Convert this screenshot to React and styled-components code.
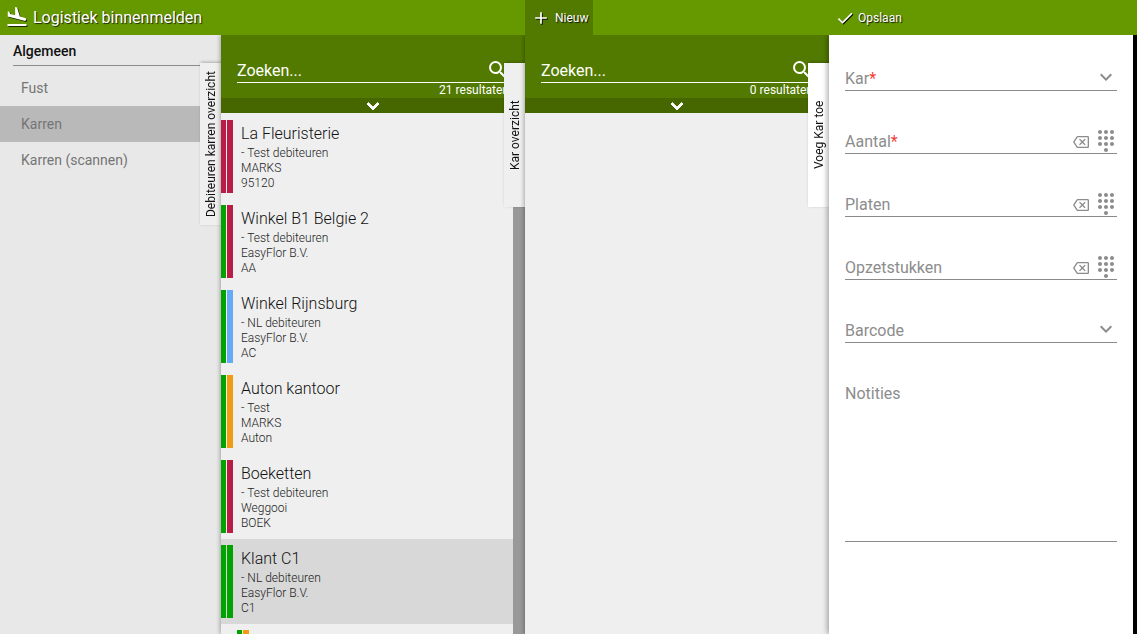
import React from "react";
import styled, { createGlobalStyle } from "styled-components";
import {
  MdFlightLand,
  MdAdd,
  MdCheck,
  MdSearch,
  MdKeyboardArrowDown,
  MdOutlineBackspace,
  MdDialpad,
} from "react-icons/md";

const RED = "#b91d47";
const GREEN = "#00a300";
const BLUE = "#64aaf5";
const ORANGE = "#f09c12";

const items = [
  { title: "La Fleuristerie", lines: ["- Test debiteuren", "MARKS", "95120"], colors: [RED, RED] },
  { title: "Winkel B1 Belgie 2", lines: ["- Test debiteuren", "EasyFlor B.V.", "AA"], colors: [GREEN, RED] },
  { title: "Winkel Rijnsburg", lines: ["- NL debiteuren", "EasyFlor B.V.", "AC"], colors: [GREEN, BLUE] },
  { title: "Auton kantoor", lines: ["- Test", "MARKS", "Auton"], colors: [GREEN, ORANGE] },
  { title: "Boeketten", lines: ["- Test debiteuren", "Weggooi", "BOEK"], colors: [GREEN, RED] },
  { title: "Klant C1", lines: ["- NL debiteuren", "EasyFlor B.V.", "C1"], colors: [GREEN, GREEN], selected: true },
];

const GlobalStyle = createGlobalStyle`
  html, body { margin: 0; padding: 0; height: 100%; overflow: hidden; background: #000; }
  body { font-family: Roboto, "Liberation Sans", sans-serif; }
  #root { height: 100%; }
`;

const Page = styled.div`
  width: 1137px;
  height: 634px;
  display: flex;
  flex-direction: column;
  overflow: hidden;
`;

const TopBar = styled.header`
  height: 35px;
  flex: none;
  display: grid;
  grid-template-columns: 525px 304px 1fr;
  background: #669900;
  color: #fff;
  position: relative;
  z-index: 5;
`;

const Brand = styled.div`
  display: flex;
  align-items: center;
  padding-left: 5px;
  gap: 4px;
  font-size: 16px;
  text-shadow: 1px 1px 1px rgba(0, 0, 0, 0.75);
  svg { filter: drop-shadow(1px 1px 0 rgba(0, 0, 0, 0.75)); margin-top: -2px; }
`;

const ActionCell = styled.div`
  display: flex;
  align-items: stretch;
`;

const ActionButton = styled.div`
  display: flex;
  align-items: center;
  gap: ${(p) => (p.$active ? 4 : 3)}px;
  padding: 0 5px 0 6px;
  background: ${(p) => (p.$active ? "#527a00" : "transparent")};
  font-size: 12px;
  text-shadow: 1px 1px 1px rgba(0, 0, 0, 0.85);
  svg { filter: drop-shadow(1px 1px 0 rgba(0, 0, 0, 0.85)); }
`;

const Columns = styled.main`
  flex: 1;
  min-height: 0;
  display: grid;
  grid-template-columns: 221px 304px 304px 304px 4px;
`;

const Sidebar = styled.nav`
  background: #e8e8e8;
  position: relative;
  z-index: 1;
  padding-top: 6px;
`;

const SectionTitle = styled.div`
  margin: 0 0 4px 13px;
  height: 24px;
  line-height: 20px;
  font-size: 14px;
  font-weight: 500;
  color: #111;
  border-bottom: 1px solid #8a8a8a;
`;

const NavItem = styled.div`
  height: 36px;
  line-height: 36px;
  padding-left: 21px;
  font-size: 14px;
  color: #757575;
  background: ${(p) => (p.$selected ? "#b9b9b9" : "transparent")};
`;

const Panel = styled.section`
  position: relative;
  display: flex;
  flex-direction: column;
  background: #efefef;
  min-height: 0;
  box-shadow: -1px 0 4px rgba(0, 0, 0, 0.3);
  z-index: ${(p) => p.$z};
`;

const SearchHead = styled.div`
  height: 63px;
  flex: none;
  background: #527a00;
  padding: 0 16px;
  color: #fff;
  display: flex;
  flex-direction: column;
`;

const SearchRow = styled.div`
  margin-top: 24px;
  height: 24px;
  display: flex;
  align-items: center;
  justify-content: space-between;
  border-bottom: 1px solid #fff;
  font-size: 16px;
  box-sizing: border-box;
  svg { margin: -2px -1px 0 0; }
`;

const ResultCount = styled.div`
  text-align: right;
  font-size: 12px;
  line-height: 15px;
  white-space: nowrap;
`;

const ExpandStrip = styled.div`
  height: 15px;
  flex: none;
  background: #466600;
  display: flex;
  align-items: center;
  justify-content: center;
  color: #fff;
  overflow: hidden;
  svg path:not([fill="none"]) { stroke: currentColor; stroke-width: 1; }
`;

const ListArea = styled.div`
  flex: 1;
  min-height: 0;
  display: flex;
  overflow: hidden;
`;

const List = styled.div`
  flex: 1;
  min-width: 0;
  overflow: hidden;
  padding-top: 1px;
`;

const Scrollbar = styled.div`
  width: 12px;
  flex: none;
  background: #999;
`;

const Row = styled.article`
  height: 85px;
  box-sizing: border-box;
  padding: 6px 0 6px ${(p) => (p.$indent ? 16 : 0)}px;
  display: flex;
  background: ${(p) => (p.$selected ? "#d8d8d8" : "transparent")};
`;

const Bar = styled.span`
  flex: none;
  width: ${(p) => p.$w}px;
  margin-right: ${(p) => (p.$first ? 1 : 0)}px;
  background: ${(p) => p.$color};
`;

const RowBody = styled.div`
  padding-left: 8px;
`;

const RowTitle = styled.div`
  font-size: 16px;
  font-weight: 300;
  line-height: 20px;
  margin-top: 4px;
  margin-bottom: 2px;
  color: #111;
`;

const RowLine = styled.div`
  font-size: 12px;
  font-weight: 300;
  line-height: 15px;
  color: #222;
`;

const SideTab = styled.div`
  position: absolute;
  top: 28px;
  right: 0;
  width: 21px;
  height: ${(p) => p.$h}px;
  background: ${(p) => p.$bg};
  box-shadow: -1px 1px 3px rgba(0, 0, 0, 0.25);
  z-index: 3;
  display: flex;
  justify-content: center;
  align-items: center;
  writing-mode: vertical-rl;
  transform: rotate(180deg);
  font-size: 12px;
  color: #111;
  white-space: nowrap;
`;

const Form = styled.section`
  background: #fff;
  padding: 0 16px;
  display: flex;
  flex-direction: column;
  gap: 7px;
  position: relative;
  z-index: 4;
  box-shadow: -2px 0 5px rgba(0, 0, 0, 0.3);
`;

const Field = styled.div`
  height: ${(p) => p.$h || 56}px;
  flex: none;
  box-sizing: border-box;
  border-bottom: 1px solid #8a8a8a;
  display: flex;
  align-items: ${(p) => (p.$top ? "flex-start" : "flex-end")};
  padding-top: ${(p) => (p.$top ? 34 : 0)}px;
  color: #8c8c8c;
`;

const FieldLabel = styled.div`
  flex: 1;
  font-size: 16px;
  line-height: 20px;
  padding-bottom: 1px;
`;

const Required = styled.span`
  color: #f44336;
`;

const FieldIcons = styled.div`
  display: flex;
  align-items: flex-end;
  gap: 5px;
  color: #8c8c8c;
`;

const ClearIcon = styled(MdOutlineBackspace)`
  margin-bottom: 3px;
`;

const PadIcon = styled(MdDialpad)`
  margin: 0 -1px 0 0;
`;

const ArrowIcon = styled(MdKeyboardArrowDown)`
  margin: 0 -1px 1px 0;
`;

const Edge = styled.div`
  background: #000;
`;

function SearchHeader({ count }) {
  return (
    <>
      <SearchHead>
        <SearchRow>
          <span>Zoeken...</span>
          <MdSearch size={24} />
        </SearchRow>
        <ResultCount>{count} resultaten</ResultCount>
      </SearchHead>
      <ExpandStrip>
        <MdKeyboardArrowDown size={24} />
      </ExpandStrip>
    </>
  );
}

function ListRow({ item }) {
  return (
    <Row $selected={item.selected}>
      <Bar $w={5} $first $color={item.colors[0]} />
      <Bar $w={6} $color={item.colors[1]} />
      <RowBody>
        <RowTitle>{item.title}</RowTitle>
        {item.lines.map((line) => (
          <RowLine key={line}>{line}</RowLine>
        ))}
      </RowBody>
    </Row>
  );
}

function NumberField({ label, required }) {
  return (
    <Field>
      <FieldLabel>
        {label}
        {required && <Required>*</Required>}
      </FieldLabel>
      <FieldIcons>
        <ClearIcon size={16} />
        <PadIcon size={24} />
      </FieldIcons>
    </Field>
  );
}

function SelectField({ label, required }) {
  return (
    <Field>
      <FieldLabel>
        {label}
        {required && <Required>*</Required>}
      </FieldLabel>
      <ArrowIcon size={24} />
    </Field>
  );
}

export default function App() {
  return (
    <Page>
      <GlobalStyle />
      <TopBar>
        <Brand>
          <MdFlightLand size={24} />
          Logistiek binnenmelden
        </Brand>
        <ActionCell>
          <ActionButton $active>
            <MdAdd size={20} />
            Nieuw
          </ActionButton>
        </ActionCell>
        <ActionCell>
          <ActionButton>
            <MdCheck size={20} />
            Opslaan
          </ActionButton>
        </ActionCell>
      </TopBar>
      <Columns>
        <Sidebar>
          <SectionTitle>Algemeen</SectionTitle>
          <NavItem>Fust</NavItem>
          <NavItem $selected>Karren</NavItem>
          <NavItem>Karren (scannen)</NavItem>
          <SideTab $h={162} $bg="#efefef">Debiteuren karren overzicht</SideTab>
        </Sidebar>
        <Panel $z={2}>
          <SearchHeader count={21} />
          <ListArea>
            <List>
              {items.map((item) => (
                <ListRow key={item.title} item={item} />
              ))}
              <Row $indent>
                <Bar $w={5} $first $color={GREEN} />
                <Bar $w={6} $color={ORANGE} />
              </Row>
            </List>
            <Scrollbar />
          </ListArea>
          <SideTab $h={144} $bg="#efefef">Kar overzicht</SideTab>
        </Panel>
        <Panel $z={3}>
          <SearchHeader count={0} />
          <ListArea />
          <SideTab $h={144} $bg="#fff">Voeg Kar toe</SideTab>
        </Panel>
        <Form>
          <SelectField label="Kar" required />
          <NumberField label="Aantal" required />
          <NumberField label="Platen" />
          <NumberField label="Opzetstukken" />
          <SelectField label="Barcode" />
          <Field $h={192} $top>
            <FieldLabel>Notities</FieldLabel>
          </Field>
        </Form>
        <Edge />
      </Columns>
    </Page>
  );
}
